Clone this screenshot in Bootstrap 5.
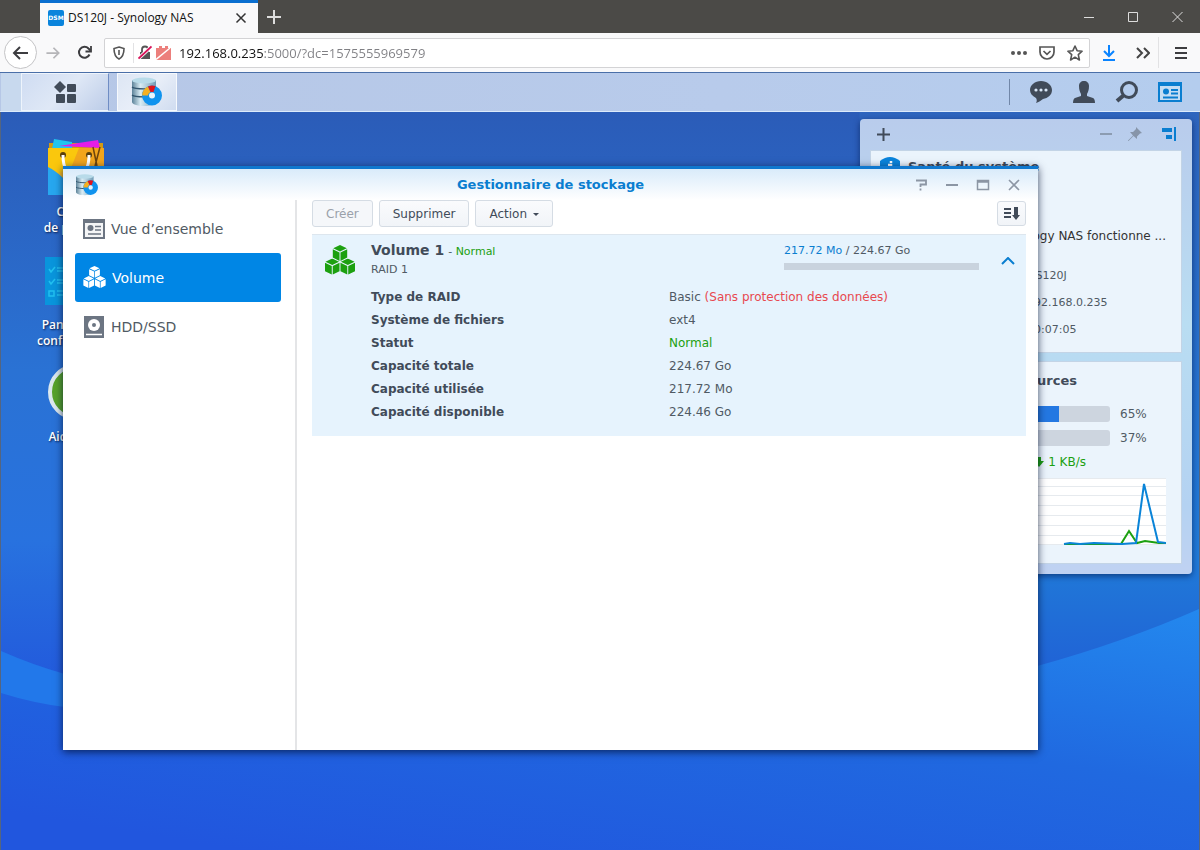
<!DOCTYPE html>
<html lang="fr">
<head>
<meta charset="utf-8">
<meta name="viewport" content="width=device-width, initial-scale=1">
<title>DS120J - Synology NAS</title>
<link href="https://cdn.jsdelivr.net/npm/bootstrap@5.3.0/dist/css/bootstrap.min.css" rel="stylesheet">
<style>
  body { font-family: "DejaVu Sans", sans-serif; font-size: 12px; line-height: 16px; color: #505a64; }
  svg { display: block; flex: none; }
  button { line-height: 16px; color: inherit; }
  .bare { background: none; border: 0; padding: 0; display: flex; align-items: center; justify-content: center; }
  .browser-ui { font-family: "Open Sans", sans-serif; color: #111; }

  /* browser */
  .tab-strip { height: 33px; background: #4b4a47; padding-left: 40px; }
  .browser-tab { width: 218px; background: #f9f9fa; border-top: 3px solid #0a6fd0; padding: 0 10px 0 8px; }
  .site-logo { width: 16px; height: 16px; border-radius: 2px; background: #0a84dc; color: #fff; font: bold 6px/16px "DejaVu Sans", sans-serif; text-align: center; }
  .win-buttons { gap: 32px; padding-right: 16px; }
  .nav-strip { height: 40px; background: #f9f9fa; padding: 0 13px 0 4px; border-bottom: 1px solid #4a6fa8; }
  .back-btn { width: 33px; height: 33px; border: 1px solid #c4c4c6; border-radius: 50%; background: #fff; }
  .url-box { height: 30px; margin-left: 12px; background: #fff; border: 1px solid #d3d3d5; border-radius: 2px; padding: 0 6px 0 8px; }
  .url-input { border: 0; outline: 0; padding: 0; min-width: 0; font-size: 13px; line-height: 18px;
    -webkit-text-fill-color: transparent; background: linear-gradient(90deg, #111 85px, #808084 85px); -webkit-background-clip: text; background-clip: text; }
  .thin-rule { width: 1px; background: #e2e2e4; }

  /* DSM task bar */
  .taskbar { height: 39px; background: linear-gradient(90deg, #b6c7e6, #b8cbeb 60%, #b4cdee); border-bottom: 1px solid #dcebfb; padding-left: 1px; color: #414b59; }
  .show-desktop { width: 20px; background: #c8d9ee; }
  .menu-btn { width: 88px; background: linear-gradient(135deg, #cfdcf2, #dfe8f6 50%, #bccce8); border: 1px solid #eef4fc; border-right-color: #6f8dc4; }
  .app-btn { width: 60px; background: linear-gradient(135deg, #dde6f4, #e8eef8 50%, #d0dcf0); border: 1px solid #f6f9fd; }
  .tray { gap: 19px; padding-right: 18px; }
  .tray-rule { width: 1px; height: 26px; background: #7187a8; }

  /* desktop */
  .desktop { background: #2264dc; border: solid #55657f; border-width: 0 1px; }
  .wallpaper { position: absolute; inset: 0; width: 100%; height: 100%; }
  .shortcuts { position: relative; width: 120px; padding: 26px 0 0 30px; font-family: "Open Sans", sans-serif; }
  .shortcut { display: flex; flex-direction: column; align-items: center; color: #fff; text-decoration: none; font-weight: 600; text-align: center; text-shadow: 1px 1px 2px #0a1e4a; margin-bottom: 16px; gap: 6px; }

  /* widget panel */
  .widgets { position: absolute; top: 7px; right: 7px; width: 332px; height: 455px; background: linear-gradient(180deg, #b9ccec, #b9ddf2 45%, #b4d2f2 85%, #c0d2f2); border-radius: 4px; box-shadow: 0 2px 6px rgba(0,20,70,.6); padding: 0 10px 10px; gap: 8px; }
  .widgets-head { height: 24px; padding: 0 6px 0 7px; margin: 3px 0 -4px; color: #414b59; }
  .widget { background: #ebf4fc; border: 1px solid #c3d4e6; padding: 6px 15px 0 9px; }
  .health-widget { flex: 1; min-height: 0; }
  .load-widget { flex: 0 0 203px; }
  .widget-title { font-size: 13px; line-height: 18px; font-weight: bold; color: #414b59; margin: 0; }
  .health-text { margin: 51px 0 24px; color: #333; text-align: right; }
  .info-table td { font-size: 11px; padding: 0 0 11px 147px; }
  .meter { height: 16px; background: #cdd5df; border-radius: 3px; overflow: hidden; }
  .meter > div { height: 100%; background: #2478e2; }
  .meter-row { display: grid; grid-template-columns: 1fr 46px; align-items: center; column-gap: 10px; margin-bottom: 8px; padding-left: 84px; }

  /* storage manager window */
  .app-window { position: absolute; left: 62px; right: 161px; top: 54px; bottom: 100px; background: #fff; border-top: 3px solid #0f78cf; box-shadow: 0 2px 8px rgba(0,15,50,.75); }
  .title-bar { height: 31px; background: linear-gradient(#d9ebfa, #fff); padding: 0 17px 0 12px; }
  .title-bar h1 { font-size: 13px; line-height: 18px; font-weight: bold; color: #0a7ed0; margin: 0; padding-left: 88px; }
  .win-tools { gap: 17px; color: #8c96a4; }
  .side { width: 234px; padding: 4px 14px 0 12px; border-right: 2px solid #e4e5e7; }
  .side-link { height: 49px; padding-left: 8px; gap: 6px; font-size: 14px; line-height: 20px; color: #505a64; text-decoration: none; border-radius: 3px; }
  .side-link svg { color: #6c7582; }
  .side-link.current, .side-link.current svg { background: #0086e5; color: #fff; }
  .pane { padding: 0 12px 0 15px; }
  .toolbar-row { gap: 6px; }
  .dsm-btn { height: 27px; padding: 0 13px; font-size: 12px; line-height: 16px; color: #414b59; background: linear-gradient(#fafbfd, #f1f4f8); border: 1px solid #d5dce4; border-radius: 3px; }
  .dsm-btn:disabled { color: #9aa1aa; background: #f5f7fa; border-color: #d5dce4; opacity: 1; }
  .dsm-btn.dropdown-toggle::after { border-width: 3px 3px 0; vertical-align: 2px; margin-left: 6px; }
  .sort-btn { width: 29px; height: 25px; padding: 0; }
  .volume { background: #e6f3fd; margin-top: 7px; padding: 6px 11px 12px 12px; border-top: 1px solid #dde6ee; }
  .volume h2 { font-size: 14px; line-height: 18px; font-weight: bold; color: #414b59; margin: 0; }
  .volume-name { margin-left: 15px; }
  .small-line { font-size: 11px; }
  .raid-line { margin: 2px 0; }
  .usage { width: 195px; margin-right: 22px; padding-top: 2px; }
  .usage-bar { height: 7px; background: #c9d3de; margin-top: 4px; }
  .ok { color: #1ca010; }
  .warn { color: #e8484f; }
  .blue { color: #0a7ed0; }
  .details { margin: 6px 0 0 47px; width: calc(100% - 47px); }
  .details th, .details td { padding: 0; height: 23px; line-height: 23px; }
  .details th { width: 298px; color: #414b59; }
</style>
</head>
<body class="vh-100 d-flex flex-column overflow-hidden">

<svg width="0" height="0" class="position-absolute" aria-hidden="true">
  <defs>
    <linearGradient id="metal" x1="0" x2="1"><stop offset="0" stop-color="#5d8399"/><stop offset=".35" stop-color="#d9ecf4"/><stop offset="1" stop-color="#6f9ab4"/></linearGradient>
    <symbol id="storage" viewBox="0 0 32 30">
      <path d="M1 3v22c0 2 5 4 12 4s12-2 12-4V3z" fill="url(#metal)"/>
      <ellipse cx="13" cy="3.500" rx="12" ry="3" fill="#b8dbe9"/>
      <path d="M1 10c3 2.500 21 2.500 24 0M1 18c3 2.500 21 2.500 24 0" fill="none" stroke="#33566e" stroke-width="1.300"/>
      <circle cx="21" cy="18.500" r="6.500" fill="#e8f4fb" stroke="#1093ee" stroke-width="7"/>
      <path d="M11.200 18.500A10 10 0 0 1 17 9.400l2.500 5.500a4 4 0 0 0-2.500 3.600z" fill="#f5b022"/>
      <path d="M17 9.400a10 10 0 0 1 7.500-.3L22.500 15h-3z" fill="#e0141c"/>
    </symbol>
    <symbol id="cube" viewBox="0 0 16 17">
      <path d="M8 0l7 3.300-7 3.400-7-3.400zM.5 4.400l7 3.400V16.500l-7-3.500zM15.500 4.400l-7 3.400v8.700l7-3.500z" fill="currentColor"/>
    </symbol>
    <symbol id="cubes" viewBox="0 0 32 32">
      <use href="#cube" x="8" y="0" width="16" height="17"/>
      <use href="#cube" x="0" y="14" width="16" height="17"/>
      <use href="#cube" x="16" y="14" width="16" height="17"/>
    </symbol>
  </defs>
</svg>

<header class="browser-ui">
  <div class="tab-strip d-flex">
    <div class="browser-tab d-flex align-items-center">
      <span class="site-logo">DSM</span>
      <span class="ms-1 me-auto">DS120J - Synology NAS</span>
      <button class="bare" aria-label="Fermer l’onglet"><svg width="14" height="14" viewBox="0 0 14 14" stroke="#333" stroke-width="1.500"><path d="M2.500 2.500l9 9M11.500 2.500l-9 9"/></svg></button>
    </div>
    <button class="bare ms-2" aria-label="Nouvel onglet"><svg width="16" height="16" viewBox="0 0 16 16" stroke="#ddd" stroke-width="2"><path d="M8 1v14M1 8h14"/></svg></button>
    <div class="win-buttons d-flex ms-auto">
      <button class="bare" aria-label="Réduire"><svg width="12" height="12" stroke="#ddd"><path d="M1 6.500h10"/></svg></button>
      <button class="bare" aria-label="Agrandir"><svg width="12" height="12" stroke="#ddd" fill="none"><path d="M1.500 1.500h9v9h-9z"/></svg></button>
      <button class="bare" aria-label="Fermer"><svg width="13" height="12" stroke="#ddd"><path d="M1.500 1l10 10M11.500 1l-10 10"/></svg></button>
    </div>
  </div>
  <div class="nav-strip d-flex align-items-center">
    <button class="bare back-btn" aria-label="Précédent"><svg width="17" height="16" viewBox="0 0 17 16" fill="none" stroke="#3d3d40" stroke-width="2"><path d="M16 8H2M8 2L2 8l6 6"/></svg></button>
    <button class="bare ms-2" aria-label="Suivant"><svg width="16" height="14" viewBox="0 0 17 16" fill="none" stroke="#b5b5b8" stroke-width="2"><path d="M1 8h14M9 2l6 6-6 6"/></svg></button>
    <button class="bare ms-3" aria-label="Actualiser"><svg width="15" height="15" viewBox="0 0 15 15" fill="none" stroke="#3d3d40" stroke-width="2"><path d="M12.500 9.500a5.500 5.500 0 1 1-1-6l2 2"/><path d="M14 1v5.500H8.500" stroke-width="1.800"/></svg></button>
    <div class="url-box d-flex align-items-center flex-grow-1">
      <svg width="12" height="14" viewBox="0 0 12 14" fill="none" stroke="#555" stroke-width="1.600"><path d="M6 1l5 1.500C11 8 10 11 6 13 2 11 1 8 1 2.500z"/><path d="M6 4v5"/></svg>
      <span class="thin-rule align-self-stretch my-1 ms-2"></span>
      <svg class="ms-1" width="14" height="15" viewBox="0 0 14 15"><path d="M4 7V4.500a3 3 0 0 1 6 0V7" fill="none" stroke="#555" stroke-width="1.800"/><path d="M2 7h10v7H2z" fill="#555"/><path d="M.5 13.500l13-12" stroke="#fff" stroke-width="3.500"/><path d="M.5 13.500l13-12" stroke="#d7145a" stroke-width="1.800"/></svg>
      <svg class="ms-1" width="15" height="14" viewBox="0 0 15 14"><path d="M0 2h3V0h3v2h3V0h3v2h3v12H0z" fill="#ec7f7c"/><path d="M0 13.500L14 2" stroke="#fff" stroke-width="1.500"/></svg>
      <input class="url-input flex-grow-1 ms-2" type="text" aria-label="Adresse" value="192.168.0.235:5000/?dc=1575555969579">
      <button class="bare" aria-label="Actions de page"><svg width="16" height="4" fill="#555"><circle cx="2" cy="2" r="2"/><circle cx="8" cy="2" r="2"/><circle cx="14" cy="2" r="2"/></svg></button>
      <button class="bare mx-2 px-1" aria-label="Pocket"><svg width="16" height="14" viewBox="0 0 16 14" fill="none" stroke="#555" stroke-width="1.700"><path d="M1 1h14v5a7 7 0 0 1-14 0z"/><path d="M4.500 5L8 8.300 11.500 5"/></svg></button>
      <button class="bare" aria-label="Marquer cette page"><svg width="16" height="16" viewBox="0 0 16 16" fill="none" stroke="#555" stroke-width="1.600" stroke-linejoin="round"><path d="M8 1l2.100 4.700 5 .5-3.800 3.400L12.400 15 8 12.200 3.600 15l1.100-5.400L.9 6.200l5-.5z"/></svg></button>
    </div>
    <button class="bare ms-2 ps-1" aria-label="Téléchargements"><svg width="14" height="16" viewBox="0 0 14 16" fill="none" stroke="#0a84ff" stroke-width="2"><path d="M7 0v11M2 6l5 5 5-5M1 15h12"/></svg></button>
    <button class="bare ms-3 ps-1" aria-label="Plus d’outils"><svg width="14" height="12" viewBox="0 0 14 12" fill="none" stroke="#444" stroke-width="2"><path d="M1 1l5 5-5 5M8 1l5 5-5 5"/></svg></button>
    <span class="thin-rule align-self-stretch my-1 ms-2 me-3"></span>
    <button class="bare" aria-label="Menu"><svg width="12" height="12" stroke="#3d3d40" stroke-width="2"><path d="M0 1h12M0 6h12M0 11h12"/></svg></button>
  </div>
</header>

<nav class="taskbar d-flex align-items-stretch">
  <button class="bare show-desktop" aria-label="Afficher le bureau"></button>
  <button class="bare menu-btn" aria-label="Menu principal"><svg width="23" height="23" viewBox="0 0 23 23" fill="currentColor"><path d="M6 0l6 6-6 6-6-6z"/><rect x="13" y="3" width="9" height="8" rx="1"/><rect x="2" y="13" width="9" height="9" rx="1"/><rect x="13" y="13" width="9" height="9" rx="1"/></svg></button>
  <button class="bare app-btn ms-2" aria-label="Gestionnaire de stockage"><svg width="32" height="30"><use href="#storage"/></svg></button>
  <div class="tray d-flex align-items-center ms-auto">
    <span class="tray-rule"></span>
    <button class="bare" aria-label="Notifications"><svg width="24" height="22" viewBox="0 0 24 22"><path d="M12 0c6 0 11 4 11 9s-4 8-9 9c-2 1-3 3-7 4 1-2 1-3 0-5C3 15 1 12 1 9c0-5 5-9 11-9z" fill="currentColor"/><g fill="#dbe8f7"><circle cx="7" cy="9" r="1.600"/><circle cx="12" cy="9" r="1.600"/><circle cx="17" cy="9" r="1.600"/></g></svg></button>
    <button class="bare" aria-label="Options"><svg width="24" height="22" viewBox="0 0 24 22" fill="currentColor"><path d="M7 5c0-3 2-5 5-5s5 2 5 5c0 4-1 6-2 8v2l6 2c1 .5 2 2 2 5H1c0-3 1-4.500 2-5l6-2v-2C8 11 7 9 7 5z"/></svg></button>
    <button class="bare" aria-label="Rechercher"><svg width="24" height="22" viewBox="0 0 24 22" fill="none" stroke="currentColor"><circle cx="14" cy="9" r="7.500" stroke-width="3"/><path d="M9 14l-7 6" stroke-width="4"/></svg></button>
    <button class="bare" aria-label="Widgets"><svg width="24" height="20" viewBox="0 0 24 20"><path d="M1 1h22v18H1z" fill="#c4ddf3" stroke="#0a7ed0" stroke-width="2"/><path d="M1 1h22v3H1z" fill="#0a7ed0"/><circle cx="8" cy="9.500" r="3" fill="#0a7ed0"/><path d="M13 8h7M13 11.500h7M5 15.500h15" stroke="#0a7ed0" stroke-width="1.800"/></svg></button>
  </div>
</nav>

<main class="desktop position-relative flex-grow-1 overflow-hidden">
  <svg class="wallpaper" viewBox="0 0 1200 738" preserveAspectRatio="none" aria-hidden="true">
    <defs>
      <linearGradient id="sky" x1="0" y1="0" x2="0" y2="1"><stop offset="0" stop-color="#2b5cb8"/><stop offset=".35" stop-color="#2a72d4"/><stop offset=".58" stop-color="#2872df"/><stop offset=".78" stop-color="#2259dc"/></linearGradient>
      <linearGradient id="hill" x1="1" y1="0" x2=".2" y2="1"><stop offset="0" stop-color="#2388ee"/><stop offset=".45" stop-color="#2069e0"/><stop offset="1" stop-color="#2156de"/></linearGradient>
      <linearGradient id="edge" x1="0" y1="0" x2="0" y2="1"><stop offset="0" stop-color="#2e65be"/><stop offset=".8" stop-color="#207ad8"/><stop offset="1" stop-color="#2062d6"/></linearGradient>
    </defs>
    <path fill="url(#sky)" d="M0 0h1200v738H0z"/>
    <path fill="url(#edge)" d="M860 0h340v560H860z"/>
    <path fill="#2278ea" d="M0 539q32 14 64 23 200 70 400 60L0 640z"/>
    <path fill="url(#hill)" d="M0 581Q32 591 64 595 364 655 664 625 880 610 1038 554 1125 530 1200 497V738H0z"/>
  </svg>

  <div class="shortcuts">
    <a class="shortcut" href="#"><svg width="58" height="60" viewBox="0 0 58 60"><path d="M2 5h54v10H2z" fill="#d39a12"/><path d="M7 1l18 3v7H5z" fill="#21c4ef"/><path d="M12 8l39-6 2 8z" fill="#e41ce8"/><path d="M1 10h56v47H1z" fill="#fcbd1d"/><path d="M1 10h56v12L1 38z" fill="#fac70d"/><path d="M32 10h25v20H24z" fill="#f2a51c"/><path d="M1 29q13 6 30 28H1z" fill="#27a7ef"/><circle cx="16" cy="17" r="3" fill="#59400d"/><circle cx="42" cy="17" r="3" fill="#59400d"/><path d="M16 17q0 20 13 20t13-20" fill="none" stroke="#fff" stroke-width="3"/><path d="M46 9l4 19M53 9l-5 19" stroke="#6d450c" stroke-width="1.500"/></svg><span>Centre<br>de paquets</span></a>
    <a class="shortcut" href="#"><svg width="62" height="55" viewBox="0 -4 62 55"><path d="M0 1h62v48H0z" fill="#0995dc"/><g fill="none" stroke="#22c0ef" stroke-width="1.500"><path d="M4 13l2 3 4-5M4 25l2 3 4-5M4 35h5v5H4zM12 12h12M12 15h12M12 24h12M12 27h12M12 35h12M12 39h12"/></g></svg><span class="mt-1">Panneau de<br>configuration</span></a>
    <a class="shortcut" href="#"><svg width="58" height="58" viewBox="0 0 58 58"><circle cx="29" cy="27" r="26" fill="#57a22b" stroke="#dce8ee" stroke-width="4"/></svg><span>Aide DSM</span></a>
  </div>

  <aside class="widgets d-flex flex-column">
    <div class="widgets-head d-flex align-items-center">
      <button class="bare me-auto" aria-label="Ajouter"><svg width="13" height="13" stroke="currentColor" stroke-width="2"><path d="M6.500 0v13M0 6.500h13"/></svg></button>
      <button class="bare" aria-label="Réduire"><svg width="12" height="12" stroke="#7e8b9e" stroke-width="1.500"><path d="M0 6h12"/></svg></button>
      <button class="bare mx-3 pe-1" aria-label="Épingler"><svg width="14" height="14" viewBox="0 0 14 14" fill="#8795a9"><path d="M8 0l6 6-2 .5-3 3V12L5.500 9 .5 14H0v-.5L5 8.500 2 5h3l3-3z"/></svg></button>
      <button class="bare" aria-label="Ancrer à droite"><svg width="14" height="14" fill="#0a7ed0"><path d="M0 1h10v4H0zM4 8h6v4H4zM12 0h2v14h-2z"/></svg></button>
    </div>
    <section class="widget health-widget">
      <div class="d-flex align-items-center gap-2"><svg width="20" height="20" viewBox="0 0 20 20"><path d="M10 0q5 0 10 4v12l-10 4L0 16V4Q5 0 10 0z" fill="#0a84dc"/><path d="M8 8h3v8M11 4v2" stroke="#fff" stroke-width="2.500" fill="none"/></svg><h2 class="widget-title">Santé du système</h2></div>
      <p class="health-text text-nowrap">Synology NAS fonctionne ...</p>
      <table class="info-table w-100">
        <tr><td>DS120J</td></tr>
        <tr><td>192.168.0.235</td></tr>
        <tr><td>00:07:05</td></tr>
      </table>
    </section>
    <section class="widget load-widget">
      <h2 class="widget-title ms-4 mb-3 pt-1">Moniteur de ressources</h2>
      <div class="meter-row"><div class="meter" role="progressbar" aria-label="Processeur" aria-valuenow="65"><div style="width:65%"></div></div><span>65%</span></div>
      <div class="meter-row"><div class="meter" role="progressbar" aria-label="Mémoire" aria-valuenow="37"><div style="width:37%"></div></div><span>37%</span></div>
      <div class="d-flex align-items-center ok gap-1 mt-2 mb-2 justify-content-end pe-5"><svg width="10" height="10" fill="currentColor"><path d="M3 0h4v4h3l-5 6-5-6h3z"/></svg><span class="me-4 pe-2">1 KB/s</span></div>
      <svg class="w-100 mt-1" height="68" viewBox="0 0 286 68" preserveAspectRatio="none"><path d="M0 0h286v66H0z" fill="#fff"/><path d="M0 .5h286M0 8.500h286M0 17.500h286M0 27.500h286M0 37.500h286M0 47.500h286M0 57.500h286M0 66.500h286" stroke="#e6eaee"/><path d="M184 66h57l8-13 8 12 8-2 14 2h7" fill="none" stroke="#1ca010" stroke-width="2"/><path d="M184 66l6-1 10 1 14-1 28 1 14-1 8-59 14 58 8 1" fill="none" stroke="#0a84d8" stroke-width="2"/></svg>
    </section>
  </aside>

  <section class="app-window d-flex flex-column">
    <div class="title-bar d-flex align-items-center">
      <svg width="24" height="22"><use href="#storage"/></svg>
      <h1 class="flex-grow-1 text-center">Gestionnaire de stockage</h1>
      <div class="win-tools d-flex">
        <button class="bare" aria-label="Aide"><svg width="14" height="12" fill="none" stroke="currentColor" stroke-width="1.800"><path d="M2 1.500h10v4H6.500V8M6.500 9.500v2"/></svg></button>
        <button class="bare" aria-label="Réduire"><svg width="14" height="12" stroke="currentColor" stroke-width="2"><path d="M1 6h12"/></svg></button>
        <button class="bare" aria-label="Agrandir"><svg width="14" height="12" fill="none" stroke="currentColor" stroke-width="1.500"><path d="M1.500 1.500h11v9h-11zM1 3h12"/></svg></button>
        <button class="bare" aria-label="Fermer"><svg width="14" height="12" stroke="currentColor" stroke-width="1.600"><path d="M2 1l10 10M12 1L2 11"/></svg></button>
      </div>
    </div>
    <div class="d-flex flex-grow-1">
      <nav class="side flex-shrink-0">
        <a class="side-link d-flex align-items-center" href="#"><svg width="22" height="20" viewBox="0 0 22 20"><path d="M1 1h20v18H1z" fill="#f4f5f6" stroke="currentColor" stroke-width="2"/><path d="M1 1h20v3H1z" fill="currentColor"/><circle cx="7.500" cy="9" r="3" fill="currentColor"/><path d="M12 7.500h6M12 11h6M5 15h13" stroke="currentColor" stroke-width="1.600"/></svg>Vue d’ensemble</a>
        <a class="side-link current d-flex align-items-center" href="#"><svg width="23" height="23"><use href="#cubes"/></svg>Volume</a>
        <a class="side-link d-flex align-items-center" href="#"><svg width="22" height="22" viewBox="0 0 22 22"><path d="M1 0h20v22H1z" fill="currentColor"/><circle cx="11" cy="9" r="6" fill="#fff"/><circle cx="11" cy="9" r="2" fill="currentColor"/><path d="M3 18.500h16" stroke="#fff" stroke-width="1.500"/></svg>HDD/SSD</a>
      </nav>
      <div class="pane flex-grow-1">
        <div class="toolbar-row d-flex align-items-center">
          <button class="dsm-btn" disabled>Créer</button>
          <button class="dsm-btn">Supprimer</button>
          <button class="dsm-btn dropdown-toggle">Action</button>
          <button class="dsm-btn sort-btn d-flex align-items-center justify-content-center ms-auto" aria-label="Trier"><svg width="16" height="13" fill="#414b59"><path d="M0 1h7v2H0zM0 5h7v2H0zM0 9h7v2H0zM10 0h4v8h2l-4 5-4-5h2z"/></svg></button>
        </div>
        <article class="volume">
          <div class="d-flex align-items-start">
            <svg class="mt-1 ok" width="32" height="31"><use href="#cubes"/></svg>
            <div class="volume-name me-auto">
              <div class="d-flex align-items-baseline gap-1"><h2>Volume 1</h2><span class="small-line">- <span class="ok">Normal</span></span></div>
              <div class="small-line raid-line">RAID 1</div>
            </div>
            <div class="usage small-line"><span class="blue">217.72 Mo</span> / 224.67 Go<div class="usage-bar"></div></div>
            <button class="bare mt-3" aria-label="Replier"><svg width="14" height="8" viewBox="0 1 14 8" fill="none" stroke="#0a7ed0" stroke-width="2"><path d="M1 8l6-6 6 6"/></svg></button>
          </div>
          <table class="details">
            <tr><th scope="row">Type de RAID</th><td>Basic <span class="warn">(Sans protection des données)</span></td></tr>
            <tr><th scope="row">Système de fichiers</th><td>ext4</td></tr>
            <tr><th scope="row">Statut</th><td class="ok">Normal</td></tr>
            <tr><th scope="row">Capacité totale</th><td>224.67 Go</td></tr>
            <tr><th scope="row">Capacité utilisée</th><td>217.72 Mo</td></tr>
            <tr><th scope="row">Capacité disponible</th><td>224.46 Go</td></tr>
          </table>
        </article>
      </div>
    </div>
  </section>
</main>
<script src="https://cdn.jsdelivr.net/npm/bootstrap@5.3.0/dist/js/bootstrap.bundle.min.js"></script>
</body>
</html>
